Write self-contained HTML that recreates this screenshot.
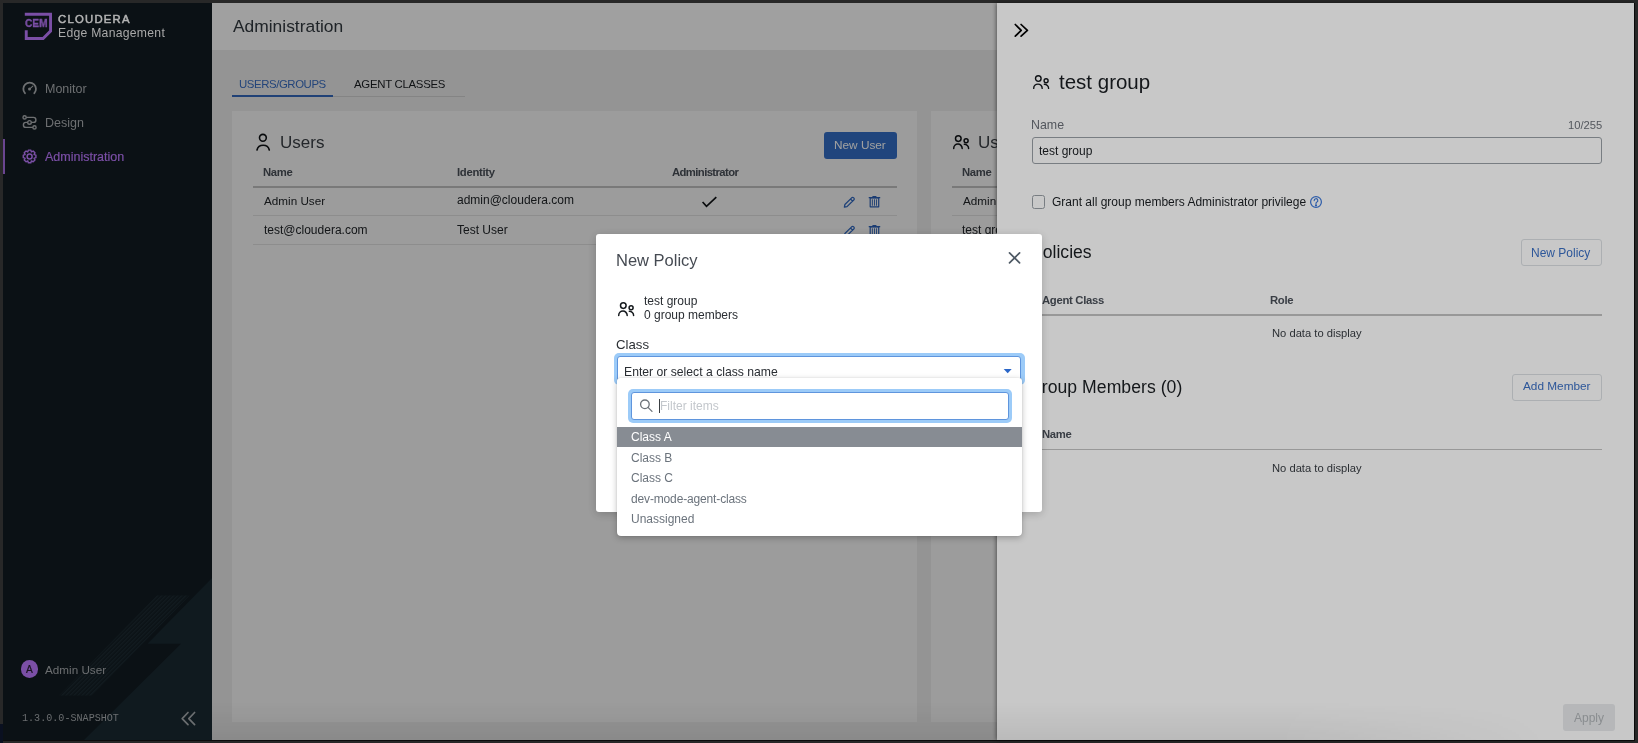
<!DOCTYPE html>
<html><head><meta charset="utf-8"><style>
html,body{margin:0;padding:0;}
body{width:1638px;height:743px;overflow:hidden;position:relative;font-family:'Liberation Sans', sans-serif;background:#262626;}
.r,.t{position:absolute;}
.t{white-space:nowrap;will-change:transform;}
#main,#drawer,#modal,#ov1,#ov2{position:absolute;left:0;top:0;width:1638px;height:743px;}
</style></head><body>
<div class="r" style="left:0px;top:0px;width:1638px;height:743px;background:#282828;"></div>
<div class="r" style="left:1634px;top:3px;width:1px;height:738px;background:#0c0c0c;"></div>
<div class="r" style="left:3px;top:740px;width:1632px;height:1px;background:#0c0c0c;"></div>
<div class="r" style="left:0px;top:724px;width:3px;height:19px;background:#0a1020;"></div>
<div class="r" style="left:3px;top:3px;width:209px;height:737px;background:#0b1115;"></div>
<svg class="r" style="left:3px;top:3px" width="209" height="737" viewBox="3 3 209 737">
<defs><pattern id="st" width="2.83" height="4" patternUnits="userSpaceOnUse" patternTransform="rotate(45)"><rect width="1.4" height="4" fill="#121b20"/></pattern></defs>
<polygon points="212,578 147.5,643.7 181,643.7 84,740 212,740" fill="#101a1f"/>
<polygon points="157,595.6 189.5,595.6 92,695.6 59,695.6" fill="url(#st)"/>
</svg>
<svg class="r" style="left:24px;top:12px" width="30" height="30" viewBox="0 0 30 30">
<path d="M0.8,2.25 H26.55 V19.1 L19.1,26.55 H2.25 V18.3" fill="none" stroke="#7b4fa6" stroke-width="2.9" stroke-linejoin="miter"/>
</svg>
<div class="t" style="left:24.50px;top:16.88px;font-size:11.6px;line-height:11.6px;color:#7b4fa6;font-weight:700;transform:scaleX(0.88);transform-origin:0 0;-webkit-text-stroke:0.35px #7b4fa6;">CEM</div>
<div class="t" style="left:58.20px;top:14.33px;font-size:11.3px;line-height:11.3px;color:#b4b4b4;font-weight:400;letter-spacing:1.25px;-webkit-text-stroke:0.5px #b4b4b4;">CLOUDERA</div>
<div class="t" style="left:58.30px;top:27.27px;font-size:12.2px;line-height:12.2px;color:#a9a9a9;font-weight:400;letter-spacing:0.27px;">Edge Management</div>
<svg class="r" style="left:18px;top:76px" width="24" height="24" viewBox="0 0 24 24">
<path d="M6.97,17.22 A6.3,6.3 0 1 1 16.33,17.22" fill="none" stroke="#6e7072" stroke-width="1.8" stroke-linecap="round"/>
<circle cx="11.5" cy="13.1" r="1.5" fill="#6e7072"/><path d="M11.5,13.1 L14.8,10.2" stroke="#6e7072" stroke-width="1.1" stroke-linecap="round"/>
</svg>
<div class="t" style="left:45.00px;top:83.42px;font-size:12.5px;line-height:12.5px;color:#6e7072;font-weight:400;">Monitor</div>
<svg class="r" style="left:18px;top:110px" width="24" height="24" viewBox="0 0 24 24" fill="none" stroke="#6e7072" stroke-width="1.4">
<circle cx="6.6" cy="7.4" r="1.6"/><circle cx="16.5" cy="17.4" r="1.6"/><circle cx="11.5" cy="12.4" r="1.8"/>
<path d="M8.2,7.4 H15.4 A2.5,2.5 0 0 1 15.4,12.4 H13.3 M9.7,12.4 H7.9 A2.5,2.5 0 0 0 7.9,17.4 H14.9"/>
</svg>
<div class="t" style="left:45.00px;top:117.42px;font-size:12.5px;line-height:12.5px;color:#6e7072;font-weight:400;">Design</div>
<div class="r" style="left:3px;top:139px;width:1.5px;height:34.599999999999994px;background:#6a4590;"></div>
<svg class="r" style="left:18px;top:144px" width="24" height="24" viewBox="0 0 24 24">
<path id="gear" fill="none" stroke="#7b4fa6" stroke-width="1.4" stroke-linejoin="round" d="M9.87,7.81 L10.32,6.08 L12.88,6.08 L13.33,7.81 L13.62,7.94 L15.16,7.02 L16.98,8.84 L16.06,10.38 L16.19,10.67 L17.92,11.12 L17.92,13.68 L16.19,14.13 L16.06,14.42 L16.98,15.96 L15.16,17.78 L13.62,16.86 L13.33,16.99 L12.88,18.72 L10.32,18.72 L9.87,16.99 L9.58,16.86 L8.04,17.78 L6.22,15.96 L7.14,14.42 L7.01,14.13 L5.28,13.68 L5.28,11.12 L7.01,10.67 L7.14,10.38 L6.22,8.84 L8.04,7.02 L9.58,7.94 Z"/>
<circle cx="11.6" cy="12.4" r="2.5" fill="none" stroke="#7b4fa6" stroke-width="1.5"/>
</svg>
<div class="t" style="left:45.00px;top:151.42px;font-size:12.5px;line-height:12.5px;color:#7b4fa6;font-weight:500;-webkit-text-stroke:0.2px #7b4fa6;">Administration</div>
<div class="r" style="left:20.8px;top:660.4px;width:17.5px;height:17.5px;border-radius:50%;background:#7b4fa6"></div>
<div class="t" style="left:25.90px;top:664.67px;font-size:10.2px;line-height:10.2px;color:#1a1420;font-weight:400;-webkit-text-stroke:0.2px #1a1420;">A</div>
<div class="t" style="left:45.00px;top:664.10px;font-size:11.7px;line-height:11.7px;color:#6d6f71;font-weight:400;">Admin User</div>
<div class="t" style="left:21.50px;top:714.26px;font-size:10.1px;line-height:10.1px;color:#6b6e70;font-weight:400;font-family:'Liberation Mono', monospace;">1.3.0.0-SNAPSHOT</div>
<svg class="r" style="left:178px;top:708px" width="20" height="20" viewBox="0 0 20 20" fill="none" stroke="#6b6e70" stroke-width="1.7" stroke-linecap="round" stroke-linejoin="round">
<path d="M10,4.5 L4.2,10.6 L10,16.7 M16.6,4.5 L10.8,10.6 L16.6,16.7"/></svg>
<div id="main">
<div class="r" style="left:212px;top:3px;width:1422px;height:737px;background:#ededed;"></div>
<div class="r" style="left:212px;top:3px;width:1422px;height:47px;background:#ffffff;"></div>
<div class="t" style="left:233.00px;top:18.27px;font-size:17.4px;line-height:17.4px;color:#333a40;font-weight:300;">Administration</div>
<div class="t" style="left:239.10px;top:79.25px;font-size:11.4px;line-height:11.4px;color:#3a6fc4;font-weight:400;letter-spacing:-0.42px;">USERS/GROUPS</div>
<div class="t" style="left:353.60px;top:79.25px;font-size:11.4px;line-height:11.4px;color:#1b1f23;font-weight:400;letter-spacing:-0.28px;">AGENT CLASSES</div>
<div class="r" style="left:232px;top:96px;width:233px;height:1px;background:#d4d4d4;"></div>
<div class="r" style="left:232px;top:95px;width:101px;height:2px;background:#3468bd;"></div>
<div class="r" style="left:232px;top:111px;width:685.4px;height:611px;background:#f9f9f9;"></div>
<svg class="r" style="left:252px;top:130px" width="24" height="24" viewBox="0 0 24 24" fill="none" stroke="#101316" stroke-width="1.6" stroke-linecap="round">
<circle cx="10.9" cy="7.8" r="3.4"/><path d="M5,20 A6.3,6 0 0 1 17.3,20"/></svg>
<div class="t" style="left:279.50px;top:133.61px;font-size:17px;line-height:17px;color:#3a3f45;font-weight:300;">Users</div>
<div class="r" style="left:823.7px;top:132px;width:73.29999999999995px;height:26.69999999999999px;background:#3570c8;border-radius:3px;"></div>
<div class="t" style="left:834.30px;top:139.51px;font-size:11.8px;line-height:11.8px;color:#ffffff;font-weight:400;">New User</div>
<div class="t" style="left:263.30px;top:166.73px;font-size:11.3px;line-height:11.3px;color:#4a5059;font-weight:700;letter-spacing:-0.3px;">Name</div>
<div class="t" style="left:456.50px;top:166.73px;font-size:11.3px;line-height:11.3px;color:#4a5059;font-weight:700;letter-spacing:-0.3px;">Identity</div>
<div class="t" style="left:671.50px;top:166.73px;font-size:11.3px;line-height:11.3px;color:#4a5059;font-weight:700;letter-spacing:-0.6px;">Administrator</div>
<div class="r" style="left:253px;top:186px;width:644px;height:1.5px;background:#c2c2c2;"></div>
<div class="t" style="left:264.00px;top:194.50px;font-size:11.7px;line-height:11.7px;color:#22262a;font-weight:400;">Admin User</div>
<div class="t" style="left:457.00px;top:194.44px;font-size:12px;line-height:12px;color:#22262a;font-weight:400;">admin@cloudera.com</div>
<svg class="r" style="left:700px;top:194px" width="20" height="16" viewBox="0 0 20 16" fill="none" stroke="#101316" stroke-width="1.7"><path d="M2.6,8 L6.5,12.3 L16.3,3.2"/></svg>
<svg class="r" style="left:843px;top:195.5px" width="14" height="14" viewBox="0 0 14 14" fill="none" stroke="#3068c0" stroke-width="1.25" stroke-linejoin="round"><path d="M1.4,11.1 L1.91,8.48 L8.65,1.83 A1.5,1.5 0 0 1 10.75,3.97 L4.01,10.62 Z M7.5,3 L9.6,5.1"/></svg>
<svg class="r" style="left:868.3px;top:195.3px" width="14" height="14" viewBox="0 0 14 14" fill="#2d62b8"><rect x="0.6" y="1.9" width="11.7" height="1.3" rx="0.5"/><rect x="4.3" y="0.9" width="4.2" height="1.3" rx="0.5"/><path d="M1.6,3 H11.3 V11.8 A0.6,0.6 0 0 1 10.7,12.4 H2.2 A0.6,0.6 0 0 1 1.6,11.8 Z M2.8,3.6 V11.3 H10.1 V3.6 Z"/><rect x="3.9" y="4.3" width="0.9" height="6.4"/><rect x="6" y="4.3" width="0.9" height="6.4"/><rect x="8.1" y="4.3" width="0.9" height="6.4"/></svg>
<div class="r" style="left:253px;top:215px;width:644px;height:1px;background:#e2e2e2;"></div>
<div class="t" style="left:264.00px;top:223.54px;font-size:12px;line-height:12px;color:#22262a;font-weight:400;">test@cloudera.com</div>
<div class="t" style="left:457.00px;top:223.54px;font-size:12px;line-height:12px;color:#22262a;font-weight:400;">Test User</div>
<svg class="r" style="left:843px;top:224.5px" width="14" height="14" viewBox="0 0 14 14" fill="none" stroke="#3068c0" stroke-width="1.25" stroke-linejoin="round"><path d="M1.4,11.1 L1.91,8.48 L8.65,1.83 A1.5,1.5 0 0 1 10.75,3.97 L4.01,10.62 Z M7.5,3 L9.6,5.1"/></svg>
<svg class="r" style="left:868.3px;top:224.3px" width="14" height="14" viewBox="0 0 14 14" fill="#2d62b8"><rect x="0.6" y="1.9" width="11.7" height="1.3" rx="0.5"/><rect x="4.3" y="0.9" width="4.2" height="1.3" rx="0.5"/><path d="M1.6,3 H11.3 V11.8 A0.6,0.6 0 0 1 10.7,12.4 H2.2 A0.6,0.6 0 0 1 1.6,11.8 Z M2.8,3.6 V11.3 H10.1 V3.6 Z"/><rect x="3.9" y="4.3" width="0.9" height="6.4"/><rect x="6" y="4.3" width="0.9" height="6.4"/><rect x="8.1" y="4.3" width="0.9" height="6.4"/></svg>
<div class="r" style="left:253px;top:244px;width:644px;height:1px;background:#e2e2e2;"></div>
<div class="r" style="left:931px;top:111px;width:703px;height:611px;background:#f9f9f9;"></div>
<svg class="r" style="left:951px;top:133.4px" width="20" height="20" viewBox="0 0 20 20" fill="none" stroke="#101316" stroke-width="1.5" stroke-linecap="round"><circle cx="7.3" cy="5.6" r="2.8"/><circle cx="15.1" cy="7.8" r="2"/><path d="M2.7,15.4 A4.25,4.3 0 0 1 11.2,15.4 M13.3,11.3 A4.3,4.1 0 0 1 17.6,15.4"/></svg>
<div class="t" style="left:978.00px;top:133.61px;font-size:17px;line-height:17px;color:#3a3f45;font-weight:300;">Users</div>
<div class="t" style="left:962.00px;top:166.73px;font-size:11.3px;line-height:11.3px;color:#4a5059;font-weight:700;letter-spacing:-0.3px;">Name</div>
<div class="r" style="left:952px;top:186px;width:682px;height:1.5px;background:#c2c2c2;"></div>
<div class="t" style="left:963.00px;top:194.50px;font-size:11.7px;line-height:11.7px;color:#22262a;font-weight:400;">Admin User</div>
<div class="r" style="left:952px;top:215px;width:682px;height:1px;background:#e2e2e2;"></div>
<div class="t" style="left:962.00px;top:223.54px;font-size:12px;line-height:12px;color:#22262a;font-weight:400;">test group</div>
<div class="r" style="left:952px;top:244px;width:682px;height:1px;background:#e2e2e2;"></div>
</div>
<div class="r" style="left:212px;top:3px;width:1422px;height:737px;background:rgba(0,0,0,0.2)"></div>
<div id="drawer">
<div class="r" style="left:997px;top:3px;width:637px;height:737px;background:#ffffff;box-shadow:-1px 0 4px rgba(0,0,0,0.45)"></div>
<svg class="r" style="left:1010px;top:20px" width="22" height="22" viewBox="0 0 22 22" fill="none" stroke="#000" stroke-width="1.7" stroke-linecap="round" stroke-linejoin="round"><path d="M5.3,4.5 L11.2,10.4 L5.3,16.2 M11.1,4.5 L17.4,10.4 L11.1,16.2"/></svg>
<svg class="r" style="left:1031.2px;top:73.3px" width="20" height="20" viewBox="0 0 20 20" fill="none" stroke="#14181c" stroke-width="1.4" stroke-linecap="round"><circle cx="7.3" cy="5.6" r="2.8"/><circle cx="15.1" cy="7.8" r="2"/><path d="M2.7,15.4 A4.25,4.3 0 0 1 11.2,15.4 M13.3,11.3 A4.3,4.1 0 0 1 17.6,15.4"/></svg>
<div class="t" style="left:1059.00px;top:71.65px;font-size:20.5px;line-height:20.5px;color:#1a1e22;font-weight:400;">test group</div>
<div class="t" style="left:1030.50px;top:119.20px;font-size:12.4px;line-height:12.4px;color:#6b7078;font-weight:400;">Name</div>
<div class="t" style="left:1567.50px;top:119.52px;font-size:11.2px;line-height:11.2px;color:#6b7078;font-weight:400;">10/255</div>
<div class="r" style="left:1031.5px;top:137px;width:570.7px;height:26.7px;box-sizing:border-box;border:1px solid #9aa0a6;border-radius:3px;background:#fff"></div>
<div class="t" style="left:1038.90px;top:145.34px;font-size:12px;line-height:12px;color:#1a1e22;font-weight:400;">test group</div>
<div class="r" style="left:1031.5px;top:194.7px;width:13.5px;height:13.9px;box-sizing:border-box;border:1.5px solid #9aa0a6;border-radius:2.5px;background:#fff"></div>
<div class="t" style="left:1052.20px;top:196.34px;font-size:12px;line-height:12px;color:#1a1e22;font-weight:400;">Grant all group members Administrator privilege</div>
<svg class="r" style="left:1309px;top:195.4px" width="14" height="14" viewBox="0 0 14 14" fill="none" stroke="#3a76d8" stroke-width="1.2"><circle cx="7" cy="7" r="5.4"/><path d="M5.2,5.6 A1.8,1.8 0 1 1 7.6,7.2 C7,7.5 7,8 7,8.6" stroke-linecap="round"/><circle cx="7" cy="10.3" r="0.5" fill="#3a76d8"/></svg>
<div class="t" style="left:1030.50px;top:243.90px;font-size:17.6px;line-height:17.6px;color:#1a1e22;font-weight:400;">Policies</div>
<div class="r" style="left:1521px;top:239.3px;width:81px;height:27px;box-sizing:border-box;border:1px solid #dcdfe3;border-radius:3px;background:#fff"></div>
<div class="t" style="left:1531.30px;top:247.14px;font-size:12px;line-height:12px;color:#3a6fc4;font-weight:400;">New Policy</div>
<div class="t" style="left:1042.00px;top:294.83px;font-size:11.3px;line-height:11.3px;color:#4a5059;font-weight:700;letter-spacing:-0.3px;">Agent Class</div>
<div class="t" style="left:1270.00px;top:294.83px;font-size:11.3px;line-height:11.3px;color:#4a5059;font-weight:700;letter-spacing:-0.3px;">Role</div>
<div class="r" style="left:1031.5px;top:314px;width:570.5px;height:1.5px;background:#c2c2c2;"></div>
<div class="t" style="left:1271.80px;top:328.32px;font-size:11.2px;line-height:11.2px;color:#373c42;font-weight:400;">No data to display</div>
<div class="t" style="left:1028.00px;top:378.50px;font-size:17.6px;line-height:17.6px;color:#1a1e22;font-weight:400;letter-spacing:0.05px;">Group Members (0)</div>
<div class="r" style="left:1512px;top:374px;width:90px;height:26.7px;box-sizing:border-box;border:1px solid #dcdfe3;border-radius:3px;background:#fff"></div>
<div class="t" style="left:1522.50px;top:381.31px;font-size:11.8px;line-height:11.8px;color:#3a6fc4;font-weight:400;">Add Member</div>
<div class="t" style="left:1042.00px;top:429.23px;font-size:11.3px;line-height:11.3px;color:#4a5059;font-weight:700;letter-spacing:-0.3px;">Name</div>
<div class="r" style="left:1031.5px;top:448.5px;width:570.5px;height:1.5px;background:#c2c2c2;"></div>
<div class="t" style="left:1271.80px;top:462.92px;font-size:11.2px;line-height:11.2px;color:#373c42;font-weight:400;">No data to display</div>
<div class="r" style="left:1563px;top:704px;width:51.8px;height:26.8px;border-radius:3px;background:#e8eaec"></div>
<div class="t" style="left:1574.00px;top:711.84px;font-size:12px;line-height:12px;color:#b0b4b8;font-weight:400;">Apply</div>
</div>
<div class="r" style="left:212px;top:3px;width:1422px;height:737px;background:rgba(0,0,0,0.215)"></div>
<div class="r" style="left:212px;top:700px;width:1422px;height:40px;background:linear-gradient(to bottom, rgba(0,0,0,0), rgba(0,0,0,0.07));-webkit-mask-image:linear-gradient(to right, #000 0%, #000 75%, transparent 95%)"></div>
<div id="modal">
<div class="r" style="left:596px;top:234px;width:446px;height:278px;background:#fff;border-radius:3px;box-shadow:0 2px 10px rgba(0,0,0,0.2)"></div>
<div class="t" style="left:615.80px;top:252.23px;font-size:16.5px;line-height:16.5px;color:#454a52;font-weight:300;">New Policy</div>
<svg class="r" style="left:1004px;top:248px" width="20" height="20" viewBox="0 0 20 20" fill="none" stroke="#4e5964" stroke-width="1.7" stroke-linecap="round"><path d="M5.5,4.9 L15.6,14.8 M15.6,4.9 L5.5,14.8"/></svg>
<svg class="r" style="left:616.4px;top:300px" width="20" height="20" viewBox="0 0 20 20" fill="none" stroke="#14181c" stroke-width="1.5" stroke-linecap="round"><circle cx="7.3" cy="5.6" r="2.8"/><circle cx="15.1" cy="7.8" r="2"/><path d="M2.7,15.4 A4.25,4.3 0 0 1 11.2,15.4 M13.3,11.3 A4.3,4.1 0 0 1 17.6,15.4"/></svg>
<div class="t" style="left:644.00px;top:295.34px;font-size:12px;line-height:12px;color:#2a2e33;font-weight:400;">test group</div>
<div class="t" style="left:644.00px;top:308.84px;font-size:12px;line-height:12px;color:#2a2e33;font-weight:400;">0 group members</div>
<div class="t" style="left:616.30px;top:338.13px;font-size:13.2px;line-height:13.2px;color:#2a2e33;font-weight:400;">Class</div>
<div class="r" style="left:613.5px;top:353px;width:411px;height:31.5px;box-sizing:border-box;border-radius:5px;background:#9ccbf8"></div>
<div class="r" style="left:616.5px;top:356px;width:404.5px;height:25.5px;box-sizing:border-box;border:1px solid #5f95dd;border-radius:3px;background:#fff"></div>
<div class="t" style="left:624.20px;top:365.67px;font-size:12.2px;line-height:12.2px;color:#2a2e33;font-weight:400;">Enter or select a class name</div>
<svg class="r" style="left:1003px;top:368px" width="10" height="7" viewBox="0 0 10 7"><path d="M0.7,1.1 H8.7 L4.7,5.3 Z" fill="#2a66c8"/></svg>
<div class="r" style="left:617px;top:378.2px;width:405px;height:157.4px;background:#fff;border-radius:3px 3px 4px 4px;box-shadow:0 2px 6px rgba(0,0,0,0.25), 0 0 1px rgba(0,0,0,0.3)"></div>
<div class="r" style="left:628px;top:388.7px;width:383.5px;height:34.3px;box-sizing:border-box;border-radius:5px;background:#9ccbf8"></div>
<div class="r" style="left:631.2px;top:391.8px;width:377.4px;height:28.2px;box-sizing:border-box;border:1px solid #5f95dd;border-radius:3px;background:#fff"></div>
<svg class="r" style="left:636px;top:396px" width="20" height="20" viewBox="0 0 20 20" fill="none" stroke="#6c7278" stroke-width="1.3" stroke-linecap="round"><circle cx="8.9" cy="8.3" r="4.3"/><path d="M12,11.4 L16,15.4"/></svg>
<div class="r" style="left:659px;top:399px;width:1.2000000000000455px;height:13.600000000000023px;background:#3a3e42;"></div>
<div class="t" style="left:660.40px;top:400.24px;font-size:12px;line-height:12px;color:#c3c7cc;font-weight:400;">Filter items</div>
<div class="r" style="left:617px;top:426.5px;width:405px;height:20.0px;background:#878c93;"></div>
<div class="t" style="left:630.60px;top:430.94px;font-size:12px;line-height:12px;color:#ffffff;font-weight:400;">Class A</div>
<div class="t" style="left:630.60px;top:451.54px;font-size:12px;line-height:12px;color:#6b737c;font-weight:400;">Class B</div>
<div class="t" style="left:630.60px;top:472.04px;font-size:12px;line-height:12px;color:#6b737c;font-weight:400;">Class C</div>
<div class="t" style="left:630.60px;top:492.54px;font-size:12px;line-height:12px;color:#6b737c;font-weight:400;letter-spacing:-0.15px;">dev-mode-agent-class</div>
<div class="t" style="left:630.60px;top:513.04px;font-size:12px;line-height:12px;color:#6b737c;font-weight:400;">Unassigned</div>
</div>
</body></html>
